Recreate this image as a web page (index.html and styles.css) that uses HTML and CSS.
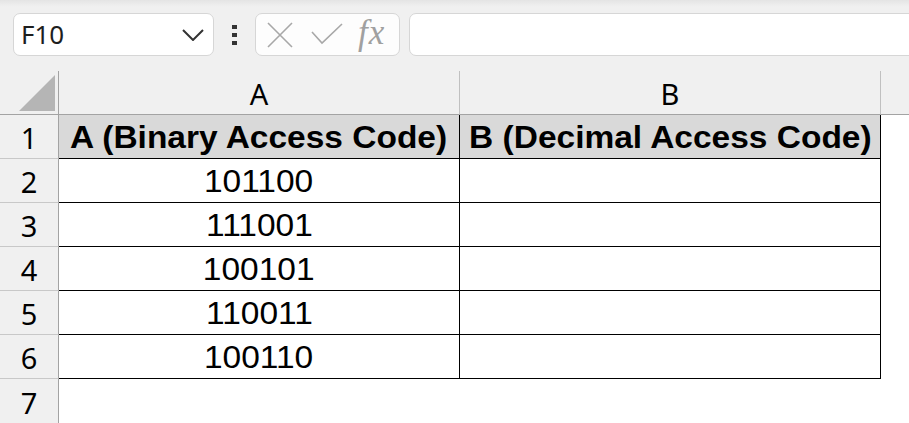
FILE: index.html
```html
<!DOCTYPE html>
<html>
<head>
<meta charset="utf-8">
<link rel="stylesheet" href="styles.css">
</head>
<body>
<div class="toolbar">
  <div class="namebox">
    <span class="name">F10</span>
    <svg class="chev" width="22" height="12" viewBox="0 0 22 12"><polyline points="1,1 11,11 21,1" fill="none" stroke="#333" stroke-width="2"/></svg>
  </div>
  <div class="dots"><span></span><span></span><span></span></div>
  <div class="fxbox">
    <svg class="ico" width="26" height="26" viewBox="0 0 26 26"><path d="M1 1 L25 25 M25 1 L1 25" stroke="#a8a8a8" stroke-width="1.6" fill="none"/></svg>
    <svg class="ico check" width="32" height="22" viewBox="0 0 32 22"><polyline points="1,9 11,20 31,1" fill="none" stroke="#a8a8a8" stroke-width="1.6"/></svg>
    <span class="fx">fx</span>
  </div>
  <div class="formula"></div>
</div>
<div class="sheet">
  <div class="corner"><div class="tri"></div></div>
  <div class="colhead">A</div>
  <div class="colhead">B</div>
  <div class="colhead rest"></div>

  <div class="rowhead">1</div>
  <div class="cell hdr"><span class="txt">A (Binary Access Code)</span></div>
  <div class="cell hdr"><span class="txt">B (Decimal Access Code)</span></div>
  <div class="blank"></div>

  <div class="rowhead">2</div>
  <div class="cell"><span class="txt">101100</span></div>
  <div class="cell"></div>
  <div class="blank"></div>

  <div class="rowhead">3</div>
  <div class="cell"><span class="txt">111001</span></div>
  <div class="cell"></div>
  <div class="blank"></div>

  <div class="rowhead">4</div>
  <div class="cell"><span class="txt">100101</span></div>
  <div class="cell"></div>
  <div class="blank"></div>

  <div class="rowhead">5</div>
  <div class="cell"><span class="txt">110011</span></div>
  <div class="cell"></div>
  <div class="blank"></div>

  <div class="rowhead">6</div>
  <div class="cell"><span class="txt">100110</span></div>
  <div class="cell"></div>
  <div class="blank"></div>

  <div class="rowhead last">7</div>
  <div class="blank"></div>
  <div class="blank"></div>
  <div class="blank"></div>
</div>
</body>
</html>
```
FILE: styles.css
```css
html, body {
  margin: 0;
  padding: 0;
  background: #ffffff;
  overflow: hidden;
  width: 909px;
  height: 423px;
}
body {
  font-family: "Segoe UI", "Noto Sans", "Liberation Sans", sans-serif;
  color: #000;
}
.toolbar {
  height: 71px;
  box-sizing: border-box;
  padding: 13px 0 0 13px;
  background: linear-gradient(to bottom, #e4e4e4 0px, #efefef 6px, #f0f0f0 8px);
  display: flex;
  align-items: flex-start;
}
.namebox {
  width: 201px;
  height: 43px;
  box-sizing: border-box;
  background: #fff;
  border: 1px solid #d6d6d6;
  border-radius: 7px;
  display: flex;
  align-items: center;
  justify-content: space-between;
  padding: 0 9px 0 7px;
}
.name {
  font-size: 26px;
  color: #1e1e1e;
  line-height: 1;
  margin-top: -2px;
}
.chev {
  display: block;
}
.dots {
  width: 41px;
  height: 43px;
  display: flex;
  flex-direction: column;
  align-items: center;
  justify-content: center;
  gap: 4px;
  padding-right: 1px;
  box-sizing: border-box;
}
.dots span {
  width: 5px;
  height: 4px;
  background: #333;
}
.fxbox {
  width: 145px;
  height: 43px;
  box-sizing: border-box;
  background: #fdfdfd;
  border: 1px solid #d6d6d6;
  border-radius: 7px;
  display: flex;
  align-items: center;
  padding-left: 11px;
}
.ico { display: block; }
.check { margin-left: 18px; margin-top: -2px; }
.fx {
  font-family: "Liberation Serif", "DejaVu Serif", serif;
  font-style: italic;
  font-size: 35px;
  color: #a0a0a0;
  margin-left: 15px;
  line-height: 1;
  margin-top: -4px;
  letter-spacing: 1px;
}
.formula {
  flex: 1;
  height: 43px;
  box-sizing: border-box;
  margin-left: 9px;
  margin-right: -20px;
  background: #fff;
  border: 1px solid #d6d6d6;
  border-radius: 7px;
}
.sheet {
  display: grid;
  grid-template-columns: 59px 401px 421px 1fr;
  grid-template-rows: 44px repeat(7, 44px);
}
.corner, .colhead {
  background: #f0f0f0;
  box-sizing: border-box;
  border-bottom: 1px solid #a3a3a3;
}
.corner {
  border-right: 1px solid #a3a3a3;
  position: relative;
}
.tri {
  position: absolute;
  left: 19px;
  top: 4px;
  width: 0;
  height: 0;
  border-style: solid;
  border-width: 0 0 36px 36px;
  border-color: transparent transparent #b5b5b5 transparent;
}
.colhead {
  border-right: 1px solid #c0c0c0;
  display: flex;
  align-items: center;
  justify-content: center;
  font-size: 29px;
  padding-top: 1px;
}
.colhead.rest { border-right: none; }
.rowhead {
  background: #f0f0f0;
  box-sizing: border-box;
  border-right: 1px solid #a3a3a3;
  border-bottom: 1px solid #c8c8c8;
  display: flex;
  align-items: center;
  justify-content: center;
  font-size: 29px;
  padding-top: 2px;
}
.rowhead.last { border-bottom: none; }
.cell {
  box-sizing: border-box;
  border-right: 1px solid #000;
  border-bottom: 1px solid #000;
  display: flex;
  align-items: center;
  justify-content: center;
  font-family: "Liberation Sans", Arial, sans-serif;
  font-size: 31px;
  padding-top: 3px;
  white-space: nowrap;
}
.txt {
  display: inline-block;
  transform: scaleX(1.08);
}
.cell.hdr {
  background: #d9d9d9;
  font-weight: bold;
}
.blank {
  background: #fff;
}
```
